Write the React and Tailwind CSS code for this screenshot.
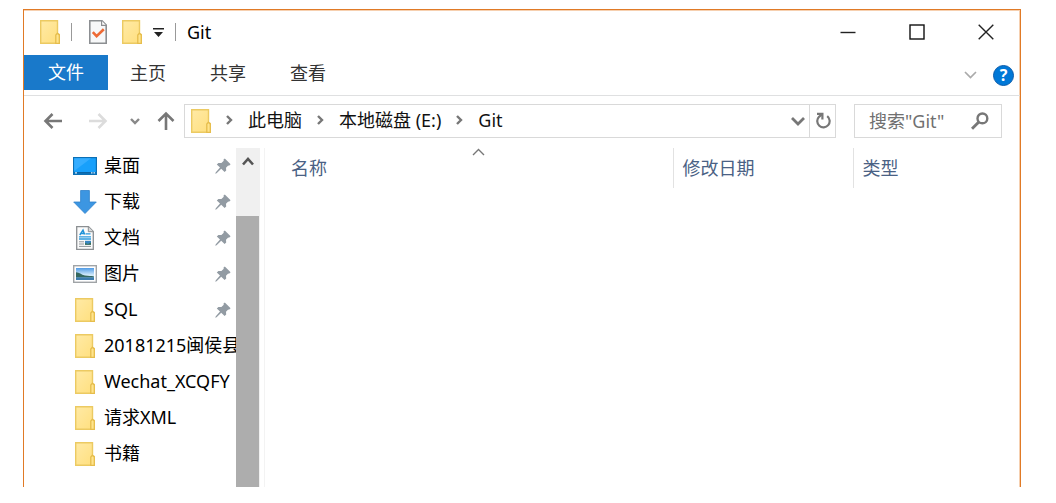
import React, { useState } from 'react';

const FolderIcon = () => (
    <svg width="20" height="24" viewBox="0 0 20 24" className="shrink-0" aria-hidden="true">
        <defs>
            <linearGradient id="folder-fill" x1="0" y1="0" x2="1" y2="1">
                <stop offset="0" stopColor="#ffeaa6" />
                <stop offset="1" stopColor="#ffdf7d" />
            </linearGradient>
        </defs>
        <path d="M0.7 0.7H17.5V13.5L19.3 14.5V23.3H0.7Z" fill="url(#folder-fill)" stroke="#ecca62" strokeWidth="1.4" />
        <path d="M15.8 23.3V15L17.4 13.2L19.3 15V23.3Z" fill="#ffe48c" stroke="#e6bd4c" strokeWidth="1.3" />
    </svg>
);

const PropertiesIcon = () => (
    <svg width="18" height="24" viewBox="0 0 18 24" aria-hidden="true">
        <path d="M0.8 0.8H13L17.2 5V23.2H0.8Z" fill="#f7f8f9" stroke="#8c8f92" strokeWidth="1.6" />
        <path d="M12.6 0.8V5.4H17.2" fill="#fff" stroke="#8c8f92" strokeWidth="1.2" />
        <path d="M3.8 12.2L7.6 16.2L14.8 9.2" fill="none" stroke="#ee6a35" strokeWidth="2.6" />
    </svg>
);

const DesktopIcon = () => (
    <svg width="24" height="18" viewBox="0 0 24 18" aria-hidden="true">
        <rect x="0.6" y="0.6" width="22.8" height="16.8" fill="#18a0fb" stroke="#0b6fb5" strokeWidth="1.2" />
        <path d="M1.2 14V1.2H18Z" fill="#35adff" />
        <path d="M1.2 15.9H22.8" stroke="#0a5f9e" strokeWidth="1.6" />
        <path d="M2 15.9H4M18 15.9H19.5M20.5 15.9H22" stroke="#d8efff" strokeWidth="1.2" />
    </svg>
);

const DownloadIcon = () => (
    <svg width="24" height="24" viewBox="0 0 24 24" aria-hidden="true">
        <path d="M7.6 0.5H16.4V12H23.3L12 23.5L0.7 12H7.6Z" fill="#3c96e2" stroke="#2f82cc" strokeWidth="0.8" />
    </svg>
);

const DocumentIcon = () => (
    <svg width="18" height="24" viewBox="0 0 18 24" aria-hidden="true">
        <path d="M0.7 0.7H12.5L17.3 5.5V23.3H0.7Z" fill="#fbfbfb" stroke="#8b8f92" strokeWidth="1.3" />
        <path d="M12.3 0.7V5.7H17.3" fill="#d7dadc" stroke="#8b8f92" />
        <path d="M3.8 9L7 4.2L8.6 8.6M4.6 7.5H8.4" fill="none" stroke="#2193d8" strokeWidth="1.5" />
        <path d="M9.5 7.8H14.5M3 10.8H15M3 13H15" stroke="#2a9ade" strokeWidth="1.3" />
        <path d="M3 15.8H8M3 18H8M3 20.4H15" stroke="#8f9599" />
        <rect x="9" y="14.8" width="6" height="4" fill="#3a86c0" />
        <path d="M9 18.8V17L12 18L15 16.6V18.8Z" fill="#3d6f52" />
    </svg>
);

const PictureIcon = () => (
    <svg width="24" height="18" viewBox="0 0 24 18" aria-hidden="true">
        <defs>
            <linearGradient id="sky" x1="0" y1="0" x2="0" y2="1">
                <stop offset="0" stopColor="#4f9be6" />
                <stop offset="0.6" stopColor="#d6ecfb" />
                <stop offset="1" stopColor="#8ec4e8" />
            </linearGradient>
        </defs>
        <rect x="0.7" y="0.7" width="22.6" height="16.6" fill="#fff" stroke="#a0a4a7" strokeWidth="1.4" />
        <rect x="3" y="3" width="18" height="12" fill="url(#sky)" />
        <path d="M3 7.2C6 7 8 9.5 12 10.6C16 11.2 18 11 21 11.4V12.6H3Z" fill="#35685f" />
        <path d="M3 12.4H21V15H3Z" fill="#3d7cae" />
    </svg>
);

const PinIcon = () => (
    <svg width="16" height="16" viewBox="0 0 16 16" className="shrink-0" aria-hidden="true">
        <path
            d="M9.8 0.4L15.6 6.2L14 7.8L13.2 7.4L11 9.8L11.2 12.6L9.6 14L6.2 10.8L1.6 15.2L0.2 15.8L0.8 14.2L5 9.6L1.8 6.4L3.4 4.9L6.4 5L8.8 2.8L8.4 1.8Z"
            fill="#929ba3"
        />
    </svg>
);

const Chevron = ({ points, width, height, stroke = '#777', strokeWidth = 2 }) => (
    <svg width={width} height={height} viewBox={`0 0 ${width} ${height}`} className="shrink-0" aria-hidden="true">
        <polyline points={points} fill="none" stroke={stroke} strokeWidth={strokeWidth} />
    </svg>
);

const Arrow = ({ d, color }) => (
    <svg width="20" height="20" viewBox="0 0 20 20" fill="none" stroke={color} strokeWidth="2.6" aria-hidden="true">
        <path d={d} />
    </svg>
);

const quickAccess = [
    { name: '桌面', icon: DesktopIcon, pinned: true },
    { name: '下载', icon: DownloadIcon, pinned: true },
    { name: '文档', icon: DocumentIcon, pinned: true },
    { name: '图片', icon: PictureIcon, pinned: true },
    { name: 'SQL', icon: FolderIcon, pinned: true },
    { name: '20181215闽侯县', icon: FolderIcon },
    { name: 'Wechat_XCQFY', icon: FolderIcon },
    { name: '请求XML', icon: FolderIcon },
    { name: '书籍', icon: FolderIcon },
];

const path = ['此电脑', '本地磁盘 (E:)', 'Git'];

const TitleBar = () => (
    <header className="flex h-[45px] items-center">
        <div className="flex flex-1 items-center pb-px pl-4">
            <FolderIcon />
            <span className="ml-[11px] h-[18px] w-px bg-[#999]" />
            <button type="button" aria-label="属性" className="ml-[17px]">
                <PropertiesIcon />
            </button>
            <button type="button" aria-label="新建文件夹" className="ml-[15px]">
                <FolderIcon />
            </button>
            <button type="button" aria-label="自定义快速访问工具栏" className="ml-[11px]">
                <svg width="11" height="9" viewBox="0 0 11 9" aria-hidden="true">
                    <path d="M0 0H11V1.6H0ZM1 4H10L5.5 9Z" fill="#222" />
                </svg>
            </button>
            <span className="ml-[11px] h-[18px] w-px bg-[#999]" />
            <h1 className="ml-[11px] leading-6 text-black">Git</h1>
        </div>
        <div className="flex self-stretch pb-[2px]">
            <button type="button" aria-label="最小化" className="flex w-[69px] items-center justify-center">
                <svg width="16" height="16" viewBox="0 0 16 16" aria-hidden="true">
                    <path d="M0.5 8.5H15.5" stroke="#222" strokeWidth="1.4" />
                </svg>
            </button>
            <button type="button" aria-label="最大化" className="flex w-[69px] items-center justify-center">
                <svg width="16" height="16" viewBox="0 0 16 16" aria-hidden="true">
                    <rect x="1" y="1" width="14" height="14" fill="none" stroke="#111" strokeWidth="1.4" />
                </svg>
            </button>
            <button type="button" aria-label="关闭" className="flex w-[69px] items-center justify-center">
                <svg width="16" height="16" viewBox="0 0 16 16" aria-hidden="true">
                    <path d="M0.7 0.7L15.3 15.3M15.3 0.7L0.7 15.3" stroke="#222" strokeWidth="1.4" />
                </svg>
            </button>
        </div>
    </header>
);

const Ribbon = () => (
    <div className="flex h-[41px] border-b border-[#dfe0e1] text-[#333]">
        <button type="button" className="h-[35px] w-[84px] bg-[#1979ca] text-white">文件</button>
        {['主页', '共享', '查看'].map((tab) => (
            <button key={tab} type="button" className="h-[37px] w-20">{tab}</button>
        ))}
        <div className="ml-auto flex items-center gap-4 pr-[6px]">
            <button type="button" aria-label="展开功能区">
                <Chevron width={13} height={8} points="1,1 6.5,6.5 12,1" stroke="#aaa" strokeWidth={1.7} />
            </button>
            <button
                type="button"
                aria-label="帮助"
                className="flex size-[21px] items-center justify-center rounded-full border border-[#0b5cab] bg-[#0078d7] text-base font-bold leading-none text-white"
            >
                ?
            </button>
        </div>
    </div>
);

const AddressBar = () => {
    const [query, setQuery] = useState('');

    return (
        <div className="flex pt-2 pr-[18px] pb-[10px] pl-2">
            <button type="button" aria-label="后退" className="flex w-[42px] items-center justify-center">
                <Arrow d="M19 10H3M9.5 3L2.5 10L9.5 17" color="#777" />
            </button>
            <button type="button" aria-label="前进" className="flex w-12 items-center justify-center">
                <Arrow d="M1 10H17M10.5 3L17.5 10L10.5 17" color="#dcdcdc" />
            </button>
            <button type="button" aria-label="最近浏览的位置" className="flex w-[26px] items-center justify-center">
                <Chevron width={10} height={7} points="1,1 5,5 9,1" stroke="#888" strokeWidth={2.4} />
            </button>
            <button type="button" aria-label="上移" className="flex w-9 items-center justify-center">
                <Arrow d="M10 19V3M2.5 10L10 2.5L17.5 10" color="#777" />
            </button>

            <div className="flex h-[34px] flex-1 items-center border border-[#d9d9d9] pl-[6px]">
                <FolderIcon />
                <nav aria-label="路径" className="flex flex-1 items-center pb-[2px]">
                    {path.map((part) => (
                        <span key={part} className="flex items-center">
                            <span className="mx-[15px]">
                                <Chevron width={7} height={10} points="1,1 5,5 1,9" strokeWidth={2.4} />
                            </span>
                            <a href="#" className="leading-6 whitespace-nowrap text-[#111]">{part}</a>
                        </span>
                    ))}
                </nav>
                <button type="button" aria-label="以前的位置" className="px-1">
                    <Chevron width={14} height={9} points="1,1 7,7 13,1" strokeWidth={2.8} />
                </button>
                <button
                    type="button"
                    aria-label="刷新"
                    className="flex w-[26px] items-center justify-center self-stretch border-l border-[#d9d9d9]"
                >
                    <svg width="16" height="18" viewBox="0 0 16 18" fill="none" stroke="#777" strokeWidth="2.2" aria-hidden="true">
                        <path d="M12.2 4.2A6.2 6.2 0 1 1 4 4.8L6.6 2.6" />
                        <path d="M2 1.8H7.4V7.4" />
                    </svg>
                </button>
            </div>

            <div className="ml-[18px] flex h-[34px] w-[148px] items-center border border-[#d9d9d9] pr-3 pl-[14px]">
                <input
                    type="text"
                    aria-label="搜索"
                    placeholder={'搜索"Git"'}
                    value={query}
                    onChange={(e) => setQuery(e.target.value)}
                    className="w-full min-w-0 flex-1 leading-6 outline-none placeholder:text-[#707070]"
                />
                <button type="button" aria-label="开始搜索">
                    <svg width="18" height="18" viewBox="0 0 18 18" fill="none" stroke="#777" aria-hidden="true">
                        <circle cx="11.4" cy="6.4" r="4.9" strokeWidth="2.4" />
                        <path d="M7.8 10L1 16.8" strokeWidth="3" />
                    </svg>
                </button>
            </div>
        </div>
    );
};

const Sidebar = () => (
    <aside className="flex w-[241px] shrink-0 border-r border-[#f3f3f3]">
        <ul className="w-[212px] shrink-0 overflow-hidden">
            {quickAccess.map(({ name, icon: Icon, pinned }) => (
                <li key={name}>
                    <a href="#" className="flex h-9 items-center pl-12 text-black">
                        <span className="flex w-[25px] shrink-0 justify-center">
                            <Icon />
                        </span>
                        <span className="ml-[7px] flex-1 overflow-hidden pb-[2px] whitespace-nowrap">{name}</span>
                        {pinned && (
                            <span className="mr-[5px]">
                                <PinIcon />
                            </span>
                        )}
                    </a>
                </li>
            ))}
        </ul>
        <div className="flex w-6 flex-col bg-[#f0f0f0]">
            <button type="button" aria-label="向上滚动" className="flex h-[68px] justify-center pt-[9px]">
                <Chevron width={12} height={9} points="1,7.5 6,2 11,7.5" stroke="#555" strokeWidth={2.6} />
            </button>
            <div className="mr-px flex-1 bg-[#adadad]" />
        </div>
    </aside>
);

const FileList = () => (
    <main className="flex-1 pl-5">
        <table className="w-full table-fixed text-left text-[#4a6184]">
            <thead>
                <tr className="h-10">
                    <th scope="col" className="relative w-[388px] border-r border-[#e2e2e2] pl-[6px] font-normal">
                        名称
                        <span className="absolute inset-x-0 top-0 flex justify-center">
                            <Chevron width={13} height={8} points="1,7 6.5,1.5 12,7" strokeWidth={1.4} />
                        </span>
                    </th>
                    <th scope="col" className="w-[180px] border-r border-[#e2e2e2] pl-[9px] font-normal">修改日期</th>
                    <th scope="col" className="pl-[9px] font-normal">类型</th>
                </tr>
            </thead>
        </table>
    </main>
);

const App = () => {
    return (
        <div className="flex h-screen bg-white pt-[9px] pr-[35px] pb-4 pl-[23px] font-['Noto_Sans','Noto_Sans_CJK_SC',sans-serif] text-[18px]">
            <div className="flex min-w-0 flex-1 flex-col border-x border-t border-[#e07a26] shadow-[inset_-1px_1px_0_#f6d0b0]">
                <TitleBar />
                <Ribbon />
                <AddressBar />
                <div className="flex flex-1">
                    <Sidebar />
                    <FileList />
                </div>
            </div>
        </div>
    );
};

export default App;
